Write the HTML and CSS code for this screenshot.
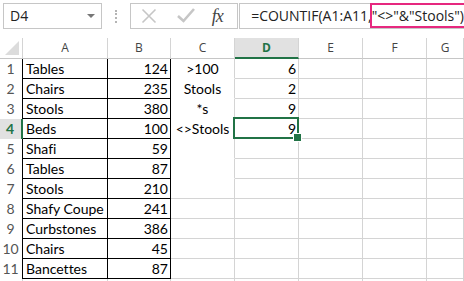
FILE: index.html
```html
<!DOCTYPE html>
<html lang="en">
<head>
    <meta charset="UTF-8">
    <title>COUNTIF</title>
    <link rel="stylesheet" href="styles.css">
</head>
<body>
    <!-- Barra de fórmulas -->
    <div class="barra">
        <div class="nombre"><span>D4</span><span class="flecha"></span></div>
        <div class="agarre"><span></span></div>
        <div class="botones">
            <svg class="icono" width="16" height="16" viewBox="0 0 16 16"><path d="M1.5 1.5 L14.5 14.5 M14.5 1.5 L1.5 14.5" stroke="#c6c6c6" stroke-width="1.6" fill="none"/></svg>
            <svg class="icono" width="18" height="16" viewBox="0 0 18 16"><path d="M1 9 L6.5 14 L17 2" stroke="#c6c6c6" stroke-width="2.6" fill="none"/></svg>
            <span class="fx">fx</span>
        </div>
        <div class="formula">=COUNTIF(A1:A11,<span class="marca">"&lt;&gt;"&amp;"Stools")</span></div>
    </div>

    <!-- Hoja -->
    <div class="hoja">
        <div class="fila cabecera">
            <div class="esquina"><span class="triangulo"></span></div>
            <div class="col">A</div><div class="col">B</div><div class="col">C</div>
            <div class="col activa">D</div><div class="col">E</div><div class="col">F</div><div class="col">G</div>
        </div>
        <div class="fila">
            <div class="num">1</div><div class="celda a">Tables</div><div class="celda b">124</div>
            <div class="celda c">&gt;100</div><div class="celda d">6</div><div class="celda"></div><div class="celda"></div><div class="celda"></div>
        </div>
        <div class="fila">
            <div class="num">2</div><div class="celda a">Chairs</div><div class="celda b">235</div>
            <div class="celda c">Stools</div><div class="celda d">2</div><div class="celda"></div><div class="celda"></div><div class="celda"></div>
        </div>
        <div class="fila">
            <div class="num">3</div><div class="celda a">Stools</div><div class="celda b">380</div>
            <div class="celda c">*s</div><div class="celda d">9</div><div class="celda"></div><div class="celda"></div><div class="celda"></div>
        </div>
        <div class="fila">
            <div class="num activa">4</div><div class="celda a">Beds</div><div class="celda b">100</div>
            <div class="celda c">&lt;&gt;Stools</div><div class="celda d seleccion">9</div><div class="celda"></div><div class="celda"></div><div class="celda"></div>
        </div>
        <div class="fila">
            <div class="num">5</div><div class="celda a">Shafi</div><div class="celda b">59</div>
            <div class="celda c"></div><div class="celda d"></div><div class="celda"></div><div class="celda"></div><div class="celda"></div>
        </div>
        <div class="fila">
            <div class="num">6</div><div class="celda a">Tables</div><div class="celda b">87</div>
            <div class="celda c"></div><div class="celda d"></div><div class="celda"></div><div class="celda"></div><div class="celda"></div>
        </div>
        <div class="fila">
            <div class="num">7</div><div class="celda a">Stools</div><div class="celda b">210</div>
            <div class="celda"></div><div class="celda d"></div><div class="celda"></div><div class="celda"></div><div class="celda"></div>
        </div>
        <div class="fila">
            <div class="num">8</div><div class="celda a">Shafy Coupe</div><div class="celda b">241</div>
            <div class="celda"></div><div class="celda d"></div><div class="celda"></div><div class="celda"></div><div class="celda"></div>
        </div>
        <div class="fila">
            <div class="num">9</div><div class="celda a">Curbstones</div><div class="celda b">386</div>
            <div class="celda"></div><div class="celda d"></div><div class="celda"></div><div class="celda"></div><div class="celda"></div>
        </div>
        <div class="fila">
            <div class="num">10</div><div class="celda a">Chairs</div><div class="celda b">45</div>
            <div class="celda"></div><div class="celda d"></div><div class="celda"></div><div class="celda"></div><div class="celda"></div>
        </div>
        <div class="fila">
            <div class="num">11</div><div class="celda a">Bancettes</div><div class="celda b">87</div>
            <div class="celda"></div><div class="celda d"></div><div class="celda"></div><div class="celda"></div><div class="celda"></div>
        </div>
        <div class="fila ultima">
            <div class="num fin"></div><div class="celda"></div><div class="celda"></div>
            <div class="celda"></div><div class="celda"></div><div class="celda"></div><div class="celda"></div><div class="celda"></div>
        </div>
    </div>
</body>
</html>
```
FILE: styles.css
```css
* {
    box-sizing: border-box;
}
body {
    margin: 0;
    width: 464px;
    height: 281px;
    overflow: hidden;
    background: white;
    font-family: "Lato", sans-serif;
    font-variant-ligatures: none;
}
/* Barra superior */
.barra {
    display: flex;
    align-items: flex-start;
    height: 38px;
    padding: 3px 0 0 3px;
}
.nombre {
    width: 102px;
    height: 26px;
    border: 1px solid #c6c6c6;
    display: flex;
    align-items: center;
    justify-content: space-between;
    padding: 0 6px 1px 6px;
    font-family: "Open Sans", sans-serif;
    font-size: 14px;
    color: #222;
}
.flecha {
    width: 0;
    height: 0;
    border-left: 4px solid transparent;
    border-right: 4px solid transparent;
    border-top: 4px solid #777;
}
.agarre {
    width: 29px;
    height: 26px;
    display: flex;
    justify-content: center;
    align-items: center;
}
.agarre span {
    width: 2px;
    height: 13px;
    border-left: 2px dotted #b4b4b4;
}
.botones {
    width: 112px;
    height: 26px;
    border: 1px solid #c6c6c6;
    display: flex;
    align-items: center;
    padding-left: 10px;
}
.icono {
    display: block;
}
.botones .icono:nth-child(2) {
    margin-left: 20px;
    margin-top: -2px;
}
.fx {
    margin-left: 17px;
    font-family: "Liberation Serif", serif;
    font-style: italic;
    font-size: 18px;
    color: #444;
    letter-spacing: -1px;
}
.formula {
    flex: 1;
    margin-left: 1px;
    height: 26px;
    border: 1px solid #c6c6c6;
    border-right: none;
    padding-left: 11px;
    font-family: "Open Sans", sans-serif;
    font-size: 14px;
    line-height: 23px;
    color: #222;
    white-space: nowrap;
}
.marca {
    padding: 2px 3px 2px 1px;
    margin: 0 -3px 0 -1px;
    outline: 2px solid #e6287f;
    outline-offset: -1px;
}
/* Hoja de cálculo */
.fila {
    display: grid;
    grid-template-columns: 23px 85px 63px 64px 64px 64px 64px 1fr;
    height: 20px;
}
.cabecera {
    height: 21px;
}
.cabecera > div {
    border-right: 1px solid #d4d4d4;
    border-bottom: 1px solid #c6c6c6;
}
.esquina {
    display: flex;
    justify-content: flex-end;
    align-items: flex-end;
    padding: 0 3px 3px 0;
}
.triangulo {
    width: 14px;
    height: 14px;
    background: #dcdcdc;
    clip-path: polygon(100% 0, 100% 100%, 0 100%);
}
.col {
    text-align: center;
    font-family: "Open Sans", sans-serif;
    font-size: 12px;
    line-height: 20px;
    color: #444;
}
.col.activa {
    background: #e1e1e1;
    color: #217346;
    font-weight: bold;
    border-bottom: 2px solid #217346 !important;
    line-height: 19px;
}
.num {
    border-right: 1px solid #000;
    font-size: 14px;
    line-height: 19px;
    text-align: center;
    color: #555;
    padding-right: 1px;
}
.num.activa {
    background: #e1e1e1;
    color: #217346;
    font-weight: bold;
    border-right: 2px solid #217346;
}
.num.fin {
    border-right-color: #d4d4d4;
}
.celda {
    border-right: 1px solid #d4d4d4;
    border-bottom: 1px solid #d4d4d4;
    font-size: 14px;
    line-height: 19px;
    color: #000;
    white-space: nowrap;
}
.celda.a {
    border-color: #000;
    padding-left: 3px;
}
.celda.b {
    border-color: #000;
    text-align: right;
    padding-right: 2px;
}
.celda.c {
    border-bottom-color: #fff;
    text-align: center;
}
.celda.d {
    text-align: right;
    padding-right: 2px;
}
.seleccion {
    position: relative;
}
.seleccion::after {
    content: "";
    position: absolute;
    top: -2px;
    left: -2px;
    right: -1px;
    bottom: -1px;
    border: 2px solid #217346;
}
.seleccion::before {
    content: "";
    position: absolute;
    right: -4px;
    bottom: -4px;
    width: 7px;
    height: 7px;
    background: #217346;
    border: 1px solid #fff;
    z-index: 1;
}
```
